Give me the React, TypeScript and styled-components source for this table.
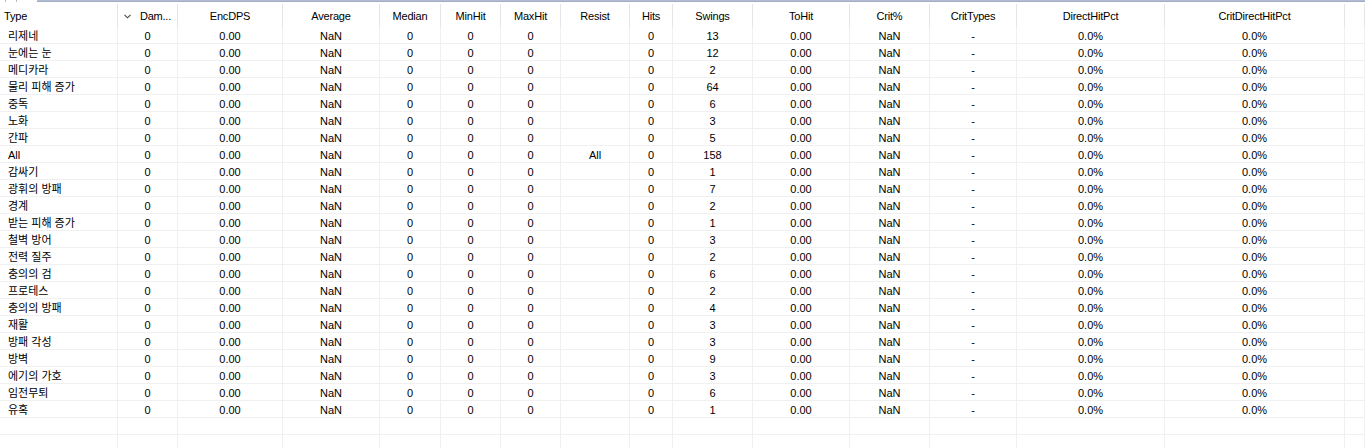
import React from 'react';
import styled, { createGlobalStyle } from 'styled-components';

type Row = { type: string; resist?: string; swings: number };

const rows: Row[] = [
  { type: '리제네', swings: 13 },
  { type: '눈에는 눈', swings: 12 },
  { type: '메디카라', swings: 2 },
  { type: '물리 피해 증가', swings: 64 },
  { type: '중독', swings: 6 },
  { type: '노화', swings: 3 },
  { type: '간파', swings: 5 },
  { type: 'All', resist: 'All', swings: 158 },
  { type: '감싸기', swings: 1 },
  { type: '광휘의 방패', swings: 7 },
  { type: '경계', swings: 2 },
  { type: '받는 피해 증가', swings: 1 },
  { type: '철벽 방어', swings: 3 },
  { type: '전력 질주', swings: 2 },
  { type: '충의의 검', swings: 6 },
  { type: '프로테스', swings: 2 },
  { type: '충의의 방패', swings: 4 },
  { type: '재활', swings: 3 },
  { type: '방패 각성', swings: 3 },
  { type: '방벽', swings: 9 },
  { type: '에기의 가호', swings: 3 },
  { type: '임전무퇴', swings: 6 },
  { type: '유혹', swings: 1 },
];

const headers = [
  'Type', 'Dam...', 'EncDPS', 'Average', 'Median', 'MinHit', 'MaxHit', 'Resist', 'Hits',
  'Swings', 'ToHit', 'Crit%', 'CritTypes', 'DirectHitPct', 'CritDirectHitPct', '',
];

export default function App() {
  return (<>
    <Global/>
    <Root>
      <TopStrip>
        <Tick style={{ left: 5 }}/>
        <Tick style={{ left: 16 }}/>
        <TopLine/>
      </TopStrip>
      <Table>
        {headers.map((h, i) => (
          <HeaderCell key={'h' + i} $left={i === 0}>
            {i === 1 && <SortMark width="7" height="5" viewBox="0 0 7 5">
              <polyline points="0.5,0.8 3.5,3.8 6.5,0.8" fill="none" stroke="#444" strokeWidth="1.1"/>
            </SortMark>}
            {h}
          </HeaderCell>
        ))}
        {rows.map((r) => (
          <React.Fragment key={r.type}>
            <Cell $left>{r.type}</Cell>
            <Cell>0</Cell>
            <Cell>0.00</Cell>
            <Cell>NaN</Cell>
            <Cell>0</Cell>
            <Cell>0</Cell>
            <Cell>0</Cell>
            <Cell>{r.resist ?? ''}</Cell>
            <Cell>0</Cell>
            <Cell>{r.swings}</Cell>
            <Cell>0.00</Cell>
            <Cell>NaN</Cell>
            <Cell>-</Cell>
            <Cell>0.0%</Cell>
            <Cell>0.0%</Cell>
            <Cell/>
          </React.Fragment>
        ))}
        {[0, 1].map((n) => headers.map((_, i) => <Cell key={'e' + n + '-' + i}/>))}
      </Table>
    </Root>
  </>);
}

const Global = createGlobalStyle`
  html, body {
    margin: 0;
    padding: 0;
    background: #fff;
    overflow: hidden;
  }
`;
const Root = styled.div`
  width: 1365px;
  height: 448px;
  overflow: hidden;
  background: #fff;
  font-family: "Liberation Sans", "Noto Sans CJK KR", sans-serif;
  font-size: 11px;
  color: #000;
`;
const TopStrip = styled.div`
  position: relative;
  height: 3px;
`;
const Tick = styled.span`
  position: absolute;
  top: 0;
  width: 1px;
  height: 2px;
  background: #b9b9b9;
`;
const TopLine = styled.div`
  margin-left: 37px;
  height: 2px;
  background: linear-gradient(#b8c2d6, #9aa8c2);
`;
const Table = styled.div`
  display: grid;
  grid-template-columns: 118px 60px 105px 97px 61px 60px 60px 69px 43px 80px 97px 80px 87px 148px 180px 1fr;
  grid-template-rows: 24px;
  grid-auto-rows: 17px;
`;
const HeaderCell = styled.div<{ $left?: boolean }>`
  display: flex;
  align-items: center;
  justify-content: ${({ $left }) => ($left ? 'flex-start' : 'center')};
  padding-left: ${({ $left }) => ($left ? '4px' : '0')};
  border-right: 1px solid #e5e5e5;
  margin-top: 1px;
  white-space: nowrap;
  letter-spacing: -0.2px;
  overflow: hidden;
`;
const SortMark = styled.svg`
  margin-right: 9px;
  margin-top: 2px;
`;
const Cell = styled.div<{ $left?: boolean }>`
  display: flex;
  align-items: center;
  justify-content: ${({ $left }) => ($left ? 'flex-start' : 'center')};
  padding-left: ${({ $left }) => ($left ? '8px' : '0')};
  padding-top: 2px;
  border-right: 1px solid #f0f0f0;
  border-bottom: 1px solid #f0f0f0;
  white-space: nowrap;
  overflow: hidden;
  line-height: 14px;
`;
